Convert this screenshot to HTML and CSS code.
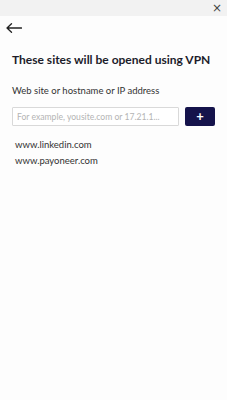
FILE: index.html
```html
<!DOCTYPE html>
<html>
<head>
<meta charset="utf-8">
<link rel="stylesheet" href="styles.css">
</head>
<body>
<div class="topbar">
  <span class="close">×</span>
</div>
<main class="content">
  <div class="back">
    <svg width="16" height="10" viewBox="0 0 16 10"><path d="M15.5 5H1M5.5 0.7L1 5l4.5 4.3" fill="none" stroke="#222" stroke-width="1.3" stroke-linecap="round" stroke-linejoin="round"/></svg>
  </div>
  <h1 class="title">These sites will be opened using VPN</h1>
  <div class="label">Web site or hostname or IP address</div>
  <div class="form">
    <input class="input" type="text" placeholder="For example, yousite.com or 17.21.1...">
    <button class="add">+</button>
  </div>
  <ul class="sites">
    <li>www.linkedin.com</li>
    <li>www.payoneer.com</li>
  </ul>
</main>
</body>
</html>
```
FILE: styles.css
```css
html, body { margin: 0; padding: 0; }
body {
  width: 227px;
  height: 400px;
  background: #fdfdfd;
  font-family: Lato, "Open Sans", sans-serif;
  color: #222;
  overflow: hidden;
}
.topbar {
  height: 16px;
  background: #f2f2f2;
  display: flex;
  justify-content: flex-end;
  align-items: center;
  padding-right: 5px;
}
.close {
  font-size: 12px;
  line-height: 12px;
  color: #444;
  font-family: "DejaVu Sans", sans-serif;
  margin-top: -1px;
}
.content { padding: 0 12px; }
.back {
  height: 10px;
  margin-top: 7px;
  margin-left: -6px;
  display: flex;
}
.title {
  margin: 20px 0 0 0;
  font-size: 12px;
  font-weight: 700;
  color: #1c1c2a;
  line-height: 14px;
}
.label {
  margin-top: 18px;
  font-size: 9.5px;
  line-height: 12px;
  color: #333;
}
.form {
  margin-top: 10px;
  display: flex;
  gap: 6px;
}
.input {
  box-sizing: border-box;
  width: 167px;
  height: 19px;
  border: 1px solid #d9d9d9;
  border-radius: 1px;
  padding: 0 4px;
  font-family: Lato, sans-serif;
  font-size: 8.6px;
  background: #fff;
  outline: none;
}
.input::placeholder { color: #b4b4b4; }
.add {
  box-sizing: border-box;
  width: 30px;
  height: 19px;
  border: none;
  border-radius: 2px;
  background: #15134b;
  color: #fff;
  font-family: Lato, sans-serif;
  font-size: 13px;
  line-height: 19px;
  padding: 0;
  font-weight: 700;
}
.sites {
  list-style: none;
  margin: 11px 0 0 3px;
  padding: 0;
  font-size: 9.5px;
  line-height: 16px;
  color: #333;
}
```
